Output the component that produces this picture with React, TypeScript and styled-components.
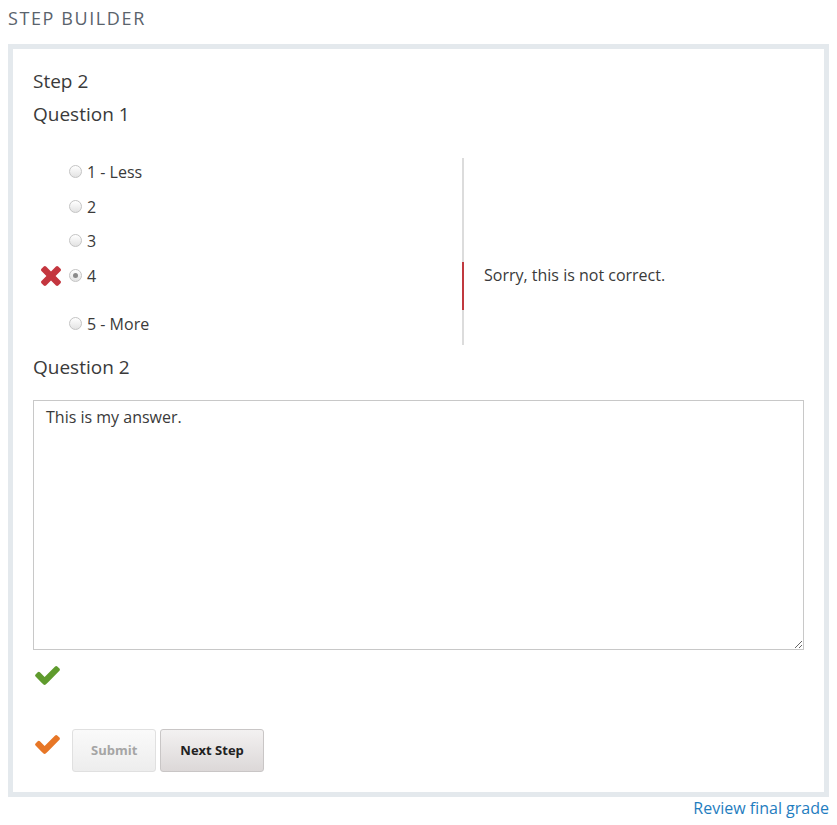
import React from "react";
import styled, { createGlobalStyle } from "styled-components";

const Global = createGlobalStyle`
  body {
    margin: 8px;
    font-family: "Open Sans", "DejaVu Sans", sans-serif;
    background: #ffffff;
    color: #3c3c3c;
  }
  * { box-sizing: border-box; }
`;

const Title = styled.h2`
  margin: 0;
  padding-bottom: 16px;
  font-size: 18px;
  font-weight: 400;
  line-height: 20px;
  letter-spacing: 1.6px;
  text-transform: uppercase;
  color: #5a636c;
`;

const Panel = styled.div`
  border: 5px solid #e4e9ed;
  padding: 20px 20px 20px 20px;
  display: flex;
  flex-direction: column;
`;

const Heading = styled.div<{ $gap: number }>`
  font-size: 19px;
  line-height: 24px;
  color: #3a3a3a;
  margin-top: ${(p) => p.$gap}px;
`;

const Choices = styled.div`
  margin-top: 32px;
  display: flex;
  flex-direction: column;
`;

const ChoiceRow = styled.div<{ $tall?: boolean }>`
  display: grid;
  grid-template-columns: 429px 1fr;
  height: ${(p) => (p.$tall ? 48.5 : 34.5)}px;
`;

const ChoiceCell = styled.label`
  display: flex;
  align-items: flex-start;
  padding-top: 4px;
  padding-left: 8px;
  font-size: 16px;
  line-height: 20px;
  color: #3a3a3a;
`;

const MarkSlot = styled.span`
  width: 28px;
  height: 20px;
  display: flex;
  align-items: center;
  justify-content: flex-start;
`;

const Radio = styled.span<{ $checked?: boolean }>`
  width: 13px;
  height: 13px;
  margin-top: 3px;
  margin-right: 5px;
  border-radius: 50%;
  border: 1px solid #c4c4c4;
  background: linear-gradient(#ffffff, #e3e3e3);
  display: flex;
  align-items: center;
  justify-content: center;
  flex-shrink: 0;
  &::after {
    content: "";
    display: ${(p) => (p.$checked ? "block" : "none")};
    width: 5px;
    height: 5px;
    border-radius: 50%;
    background: #8a8a8a;
  }
`;

const FeedbackCell = styled.div<{ $error?: boolean }>`
  border-left: 2px solid ${(p) => (p.$error ? "#c0393f" : "#dcdcdc")};
  padding: 3px 0 0 20px;
  font-size: 16px;
  line-height: 20px;
  color: #3a3a3a;
`;

const Answer = styled.textarea`
  margin-top: 21px;
  width: 100%;
  height: 250px;
  border: 1px solid #c8c8c8;
  padding: 6px 12px;
  font-family: "Open Sans", "DejaVu Sans", sans-serif;
  font-size: 16px;
  line-height: 20px;
  color: #3a3a3a;
  resize: vertical;
  outline: none;
  display: block;
`;

const StatusIcon = styled.div`
  margin-top: 16px;
  height: 20px;
  display: flex;
  align-items: center;
  padding-left: 2px;
`;

const Footer = styled.div`
  margin-top: 43px;
  display: flex;
  align-items: flex-start;
  gap: 4px;
`;

const FooterMark = styled.div`
  width: 35px;
  padding-left: 2px;
  padding-top: 6px;
  display: flex;
`;

const Button = styled.button<{ $disabled?: boolean }>`
  height: 43px;
  padding: 0 18px;
  font-family: "Open Sans", "DejaVu Sans", sans-serif;
  font-size: 13px;
  font-weight: 700;
  border-radius: 3px;
  border: 1px solid ${(p) => (p.$disabled ? "#e0e0e0" : "#c9c6c6")};
  color: ${(p) => (p.$disabled ? "#a5a5a5" : "#222222")};
  background: ${(p) =>
    p.$disabled
      ? "linear-gradient(#fafafa, #ededed)"
      : "linear-gradient(#f3f1f1, #dcd8d8)"};
  cursor: ${(p) => (p.$disabled ? "default" : "pointer")};
`;

const NextButton = styled(Button)`
  padding: 0 19px;
`;

const LinkRow = styled.div`
  display: flex;
  justify-content: flex-end;
  padding-top: 1px;
`;

const Link = styled.a`
  font-size: 16px;
  line-height: 20px;
  color: #1f7dc0;
  text-decoration: none;
`;

const CheckIcon = ({ color }: { color: string }) => (
  <svg width="25" height="19" viewBox="121 334 1550 1188" aria-hidden>
    <path
      fill={color}
      d="M1671 566q0 40-28 68l-724 724-136 136q-28 28-68 28t-68-28l-136-136-362-362q-28-28-28-68t28-68l136-136q28-28 68-28t68 28l294 295 656-657q28-28 68-28t68 28l136 136q28 28 28 68z"
    />
  </svg>
);

const CrossIcon = () => (
  <svg width="20" height="20" viewBox="302 366 1188 1188" aria-hidden>
    <path
      fill="#c4363f"
      d="M1490 1322q0 40-28 68l-136 136q-28 28-68 28t-68-28l-294-294-294 294q-28 28-68 28t-68-28l-136-136q-28-28-28-68t28-68l294-294-294-294q-28-28-28-68t28-68l136-136q28-28 68-28t68 28l294 294 294-294q28-28 68-28t68 28l136 136q28 28 28 68t-28 68l-294 294 294 294q28 28 28 68z"
    />
  </svg>
);

const choices = [
  { label: "1 - Less" },
  { label: "2" },
  { label: "3" },
  { label: "4", selected: true, feedback: "Sorry, this is not correct." },
  { label: "5 - More" },
];

export default function App() {
  return (
    <>
      <Global />
      <Title>Step Builder</Title>
      <Panel>
        <Heading $gap={0}>Step 2</Heading>
        <Heading $gap={9}>Question 1</Heading>
        <Choices>
          {choices.map((c) => (
            <ChoiceRow key={c.label} $tall={!!c.feedback}>
              <ChoiceCell>
                <MarkSlot>{c.selected ? <CrossIcon /> : null}</MarkSlot>
                <Radio $checked={!!c.selected} />
                {c.label}
              </ChoiceCell>
              <FeedbackCell $error={!!c.feedback}>{c.feedback}</FeedbackCell>
            </ChoiceRow>
          ))}
        </Choices>
        <Heading $gap={10}>Question 2</Heading>
        <Answer defaultValue="This is my answer." />
        <StatusIcon>
          <CheckIcon color="#5f9b2d" />
        </StatusIcon>
        <Footer>
          <FooterMark>
            <CheckIcon color="#e77626" />
          </FooterMark>
          <Button $disabled disabled>
            Submit
          </Button>
          <NextButton>Next Step</NextButton>
        </Footer>
      </Panel>
      <LinkRow>
        <Link href="#">Review final grade</Link>
      </LinkRow>
    </>
  );
}
